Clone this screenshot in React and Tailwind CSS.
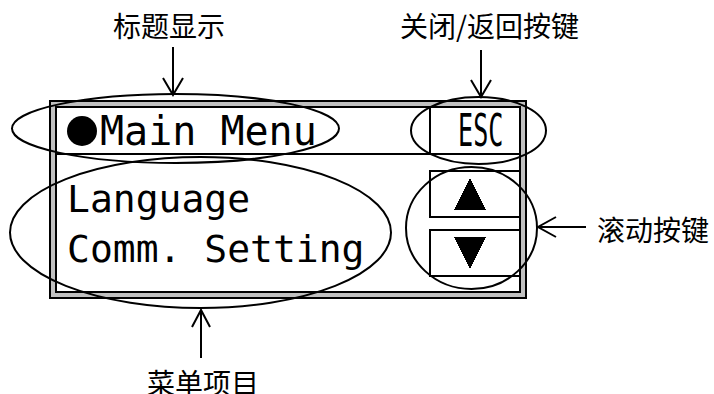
import React from 'react';

const lcd = { fontFamily: '"DejaVu Sans Mono", "Liberation Mono", monospace' };
const cjk = { fontFamily: '"Noto Sans CJK SC", "Noto Sans", sans-serif' };

function Triangle({ down }) {
  return (
    <svg width="32" height="32" viewBox="0 0 32 32" shapeRendering="crispEdges">
      {down
        ? <polygon points="0,0 32,0 16,32" fill="black" />
        : <polygon points="16,0 32,32 0,32" fill="black" />}
    </svg>
  );
}

function Annotations() {
  return (
    <svg className="absolute left-0 top-0 pointer-events-none" width="714" height="394" viewBox="0 0 714 394">
      <g fill="none" stroke="black" strokeWidth="2">
        <ellipse cx="175.5" cy="128.5" rx="163.5" ry="34.5" />
        <ellipse cx="478.5" cy="130.5" rx="67.5" ry="33.5" />
        <ellipse cx="200.5" cy="232.5" rx="190.5" ry="75.5" />
        <ellipse cx="471.5" cy="228" rx="65.5" ry="61" />

        <line x1="173" y1="47" x2="173" y2="95" />
        <polyline points="163,78 173,95 183,78" />
        <line x1="481" y1="50" x2="481" y2="97" />
        <polyline points="471,80 481,97 491,80" />
        <line x1="538" y1="227" x2="586" y2="227" />
        <polyline points="556,217 538,227 556,237" />
        <line x1="201" y1="310" x2="201" y2="358" />
        <polyline points="192,327 201,310 210,327" />
      </g>
    </svg>
  );
}

export default function App() {
  return (
    <div className="relative w-[714px] h-[394px] bg-white overflow-hidden pl-[49px] pt-[100px]">
      {/* LCD panel */}
      <div className="w-[478px] h-[199px] border-2 border-black bg-[#c0c0c0] p-[4px]">
        <div className="h-full border-2 border-black bg-white flex flex-col text-black">
          <div className="flex h-[47px]">
            <div className="flex-1 flex items-center pl-[10px] border-b-2 border-black">
              <div className="w-[30px] h-[30px] rounded-full bg-black" />
              <span className="ml-[3px] text-[40px] leading-[40px] whitespace-pre" style={lcd}>Main Menu</span>
            </div>
            <div className="w-[90px] flex items-center justify-center pl-[12px] border-l-2 border-b-2 border-black">
              <span className="inline-block text-[44px] leading-[44px] scale-x-[0.57]" style={lcd}>ESC</span>
            </div>
          </div>
          <div className="flex-1 flex">
            <div className="flex-1 flex flex-col pl-[10px] pt-[19px] text-[38px] leading-[50px] whitespace-pre" style={lcd}>
              <span>Language</span>
              <span>Comm. Setting</span>
            </div>
            <div className="w-[90px] flex flex-col gap-[11px] pt-[15px]">
              <div className="h-[48px] flex items-center pl-[23px] border-l-2 border-t-2 border-b-2 border-black">
                <Triangle />
              </div>
              <div className="h-[48px] flex items-center pl-[23px] border-l-2 border-t-2 border-b-2 border-black">
                <Triangle down />
              </div>
            </div>
          </div>
        </div>
      </div>

      <Annotations />

      <span className="absolute left-[113px] top-[11px] text-[28px] leading-[28px] text-black" style={cjk}>标题显示</span>
      <span className="absolute left-[400px] top-[11px] text-[28px] leading-[28px] text-black" style={cjk}>关闭/返回按键</span>
      <span className="absolute left-[597px] top-[215px] text-[28px] leading-[28px] text-black" style={cjk}>滚动按键</span>
      <span className="absolute left-[147px] top-[368px] text-[28px] leading-[28px] text-black" style={cjk}>菜单项目</span>
    </div>
  );
}
